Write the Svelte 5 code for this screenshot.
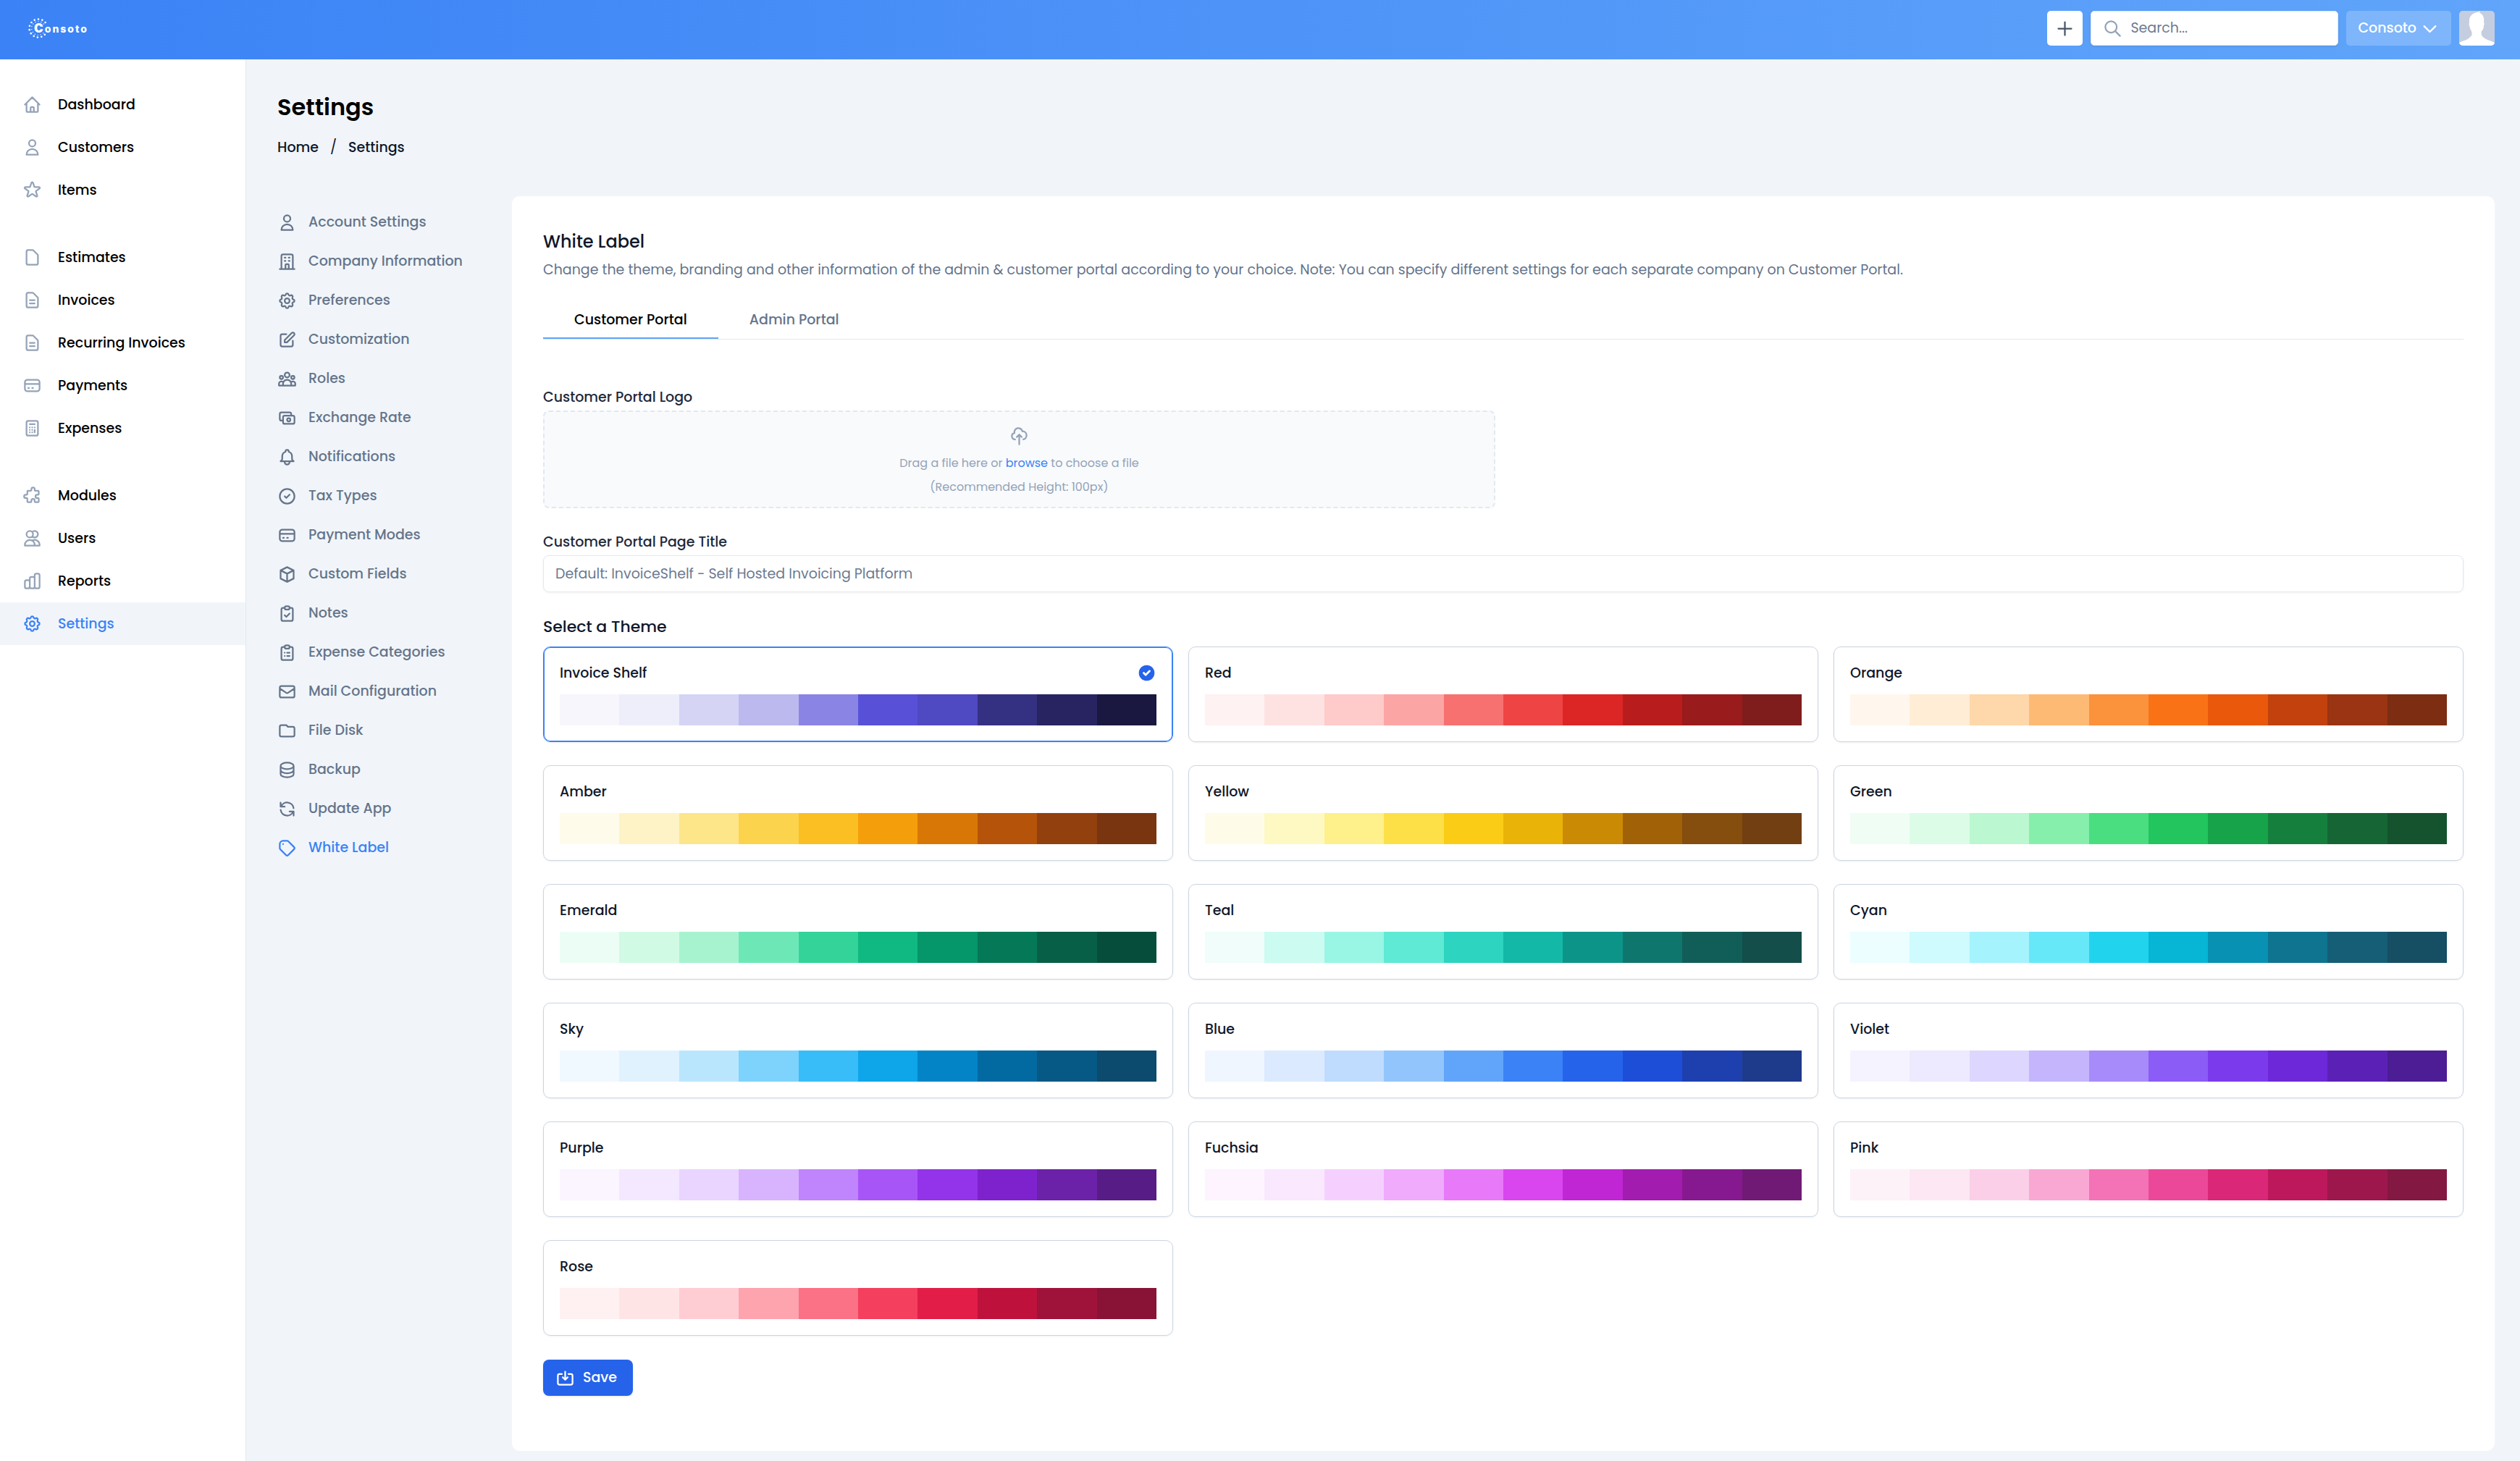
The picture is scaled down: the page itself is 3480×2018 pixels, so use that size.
<script>
  const icons = {
    home: 'M3 12l2-2m0 0l7-7 7 7M5 10v10a1 1 0 001 1h3m10-11l2 2m-2-2v10a1 1 0 01-1 1h-3m-6 0a1 1 0 001-1v-4a1 1 0 011-1h2a1 1 0 011 1v4a1 1 0 001 1m-6 0h6',
    user: 'M16 7a4 4 0 11-8 0 4 4 0 018 0zM12 14a7 7 0 00-7 7h14a7 7 0 00-7-7z',
    star: 'M11.049 2.927c.3-.921 1.603-.921 1.902 0l1.519 4.674a1 1 0 00.95.69h4.915c.969 0 1.371 1.24.588 1.81l-3.976 2.888a1 1 0 00-.363 1.118l1.518 4.674c.3.922-.755 1.688-1.538 1.118l-3.976-2.888a1 1 0 00-1.176 0l-3.976 2.888c-.783.57-1.838-.197-1.538-1.118l1.518-4.674a1 1 0 00-.363-1.118l-3.976-2.888c-.784-.57-.38-1.81.588-1.81h4.914a1 1 0 00.951-.69l1.519-4.674z',
    document: 'M7 21h10a2 2 0 002-2V9.414a1 1 0 00-.293-.707l-5.414-5.414A1 1 0 0012.586 3H7a2 2 0 00-2 2v14a2 2 0 002 2z',
    documentText: 'M9 12h6m-6 4h6m2 5H7a2 2 0 01-2-2V5a2 2 0 012-2h5.586a1 1 0 01.707.293l5.414 5.414a1 1 0 01.293.707V19a2 2 0 01-2 2z',
    card: 'M3 10h18M7 15h1m4 0h1m-7 4h12a3 3 0 003-3V8a3 3 0 00-3-3H6a3 3 0 00-3 3v8a3 3 0 003 3z',
    calculator: 'M9 7h6m0 10v-3m-3 3h.01M9 17h.01M9 14h.01M12 14h.01M15 11h.01M12 11h.01M9 11h.01M7 21h10a2 2 0 002-2V5a2 2 0 00-2-2H7a2 2 0 00-2 2v14a2 2 0 002 2z',
    puzzle: 'M11 4a2 2 0 114 0v1a1 1 0 001 1h3a1 1 0 011 1v3a1 1 0 01-1 1h-1a2 2 0 100 4h1a1 1 0 011 1v3a1 1 0 01-1 1h-3a1 1 0 01-1-1v-1a2 2 0 10-4 0v1a1 1 0 01-1 1H7a1 1 0 01-1-1v-3a1 1 0 00-1-1H4a2 2 0 110-4h1a1 1 0 001-1V7a1 1 0 011-1h3a1 1 0 001-1V4z',
    users: 'M12 4.354a4 4 0 110 5.292M15 21H3v-1a6 6 0 0112 0v1zm0 0h6v-1a6 6 0 00-9-5.197M13 7a4 4 0 11-8 0 4 4 0 018 0z',
    chart: 'M9 19v-6a2 2 0 00-2-2H5a2 2 0 00-2 2v6a2 2 0 002 2h2a2 2 0 002-2zm0 0V9a2 2 0 012-2h2a2 2 0 012 2v10m-6 0a2 2 0 002 2h2a2 2 0 002-2m0 0V5a2 2 0 012-2h2a2 2 0 012 2v14a2 2 0 01-2 2h-2a2 2 0 01-2-2z',
    cog: 'M10.325 4.317c.426-1.756 2.924-1.756 3.35 0a1.724 1.724 0 002.573 1.066c1.543-.94 3.31.826 2.37 2.37a1.724 1.724 0 001.065 2.572c1.756.426 1.756 2.924 0 3.35a1.724 1.724 0 00-1.066 2.573c.94 1.543-.826 3.31-2.37 2.37a1.724 1.724 0 00-2.572 1.065c-.426 1.756-2.924 1.756-3.35 0a1.724 1.724 0 00-2.573-1.066c-1.543.94-3.31-.826-2.37-2.37a1.724 1.724 0 00-1.065-2.572c-1.756-.426-1.756-2.924 0-3.35a1.724 1.724 0 001.066-2.573c-.94-1.543.826-3.31 2.37-2.37.996.608 2.296.07 2.572-1.065zM15 12a3 3 0 11-6 0 3 3 0 016 0z',
    office: 'M19 21V5a2 2 0 00-2-2H7a2 2 0 00-2 2v16m14 0h2m-2 0h-5m-9 0H3m2 0h5M9 7h1m-1 4h1m4-4h1m-1 4h1m-5 10v-5a1 1 0 011-1h2a1 1 0 011 1v5m-4 0h4',
    pencil: 'M11 5H6a2 2 0 00-2 2v11a2 2 0 002 2h11a2 2 0 002-2v-5m-1.414-9.414a2 2 0 112.828 2.828L11.828 15H9v-2.828l8.586-8.586z',
    group: 'M17 20h5v-2a3 3 0 00-5.356-1.857M17 20H7m10 0v-2c0-.656-.126-1.283-.356-1.857M7 20H2v-2a3 3 0 015.356-1.857M7 20v-2c0-.656.126-1.283.356-1.857m0 0a5.002 5.002 0 019.288 0M15 7a3 3 0 11-6 0 3 3 0 016 0zm6 3a2 2 0 11-4 0 2 2 0 014 0zM7 10a2 2 0 11-4 0 2 2 0 014 0z',
    cash: 'M17 9V7a2 2 0 00-2-2H5a2 2 0 00-2 2v6a2 2 0 002 2h2m2 4h10a2 2 0 002-2v-6a2 2 0 00-2-2H9a2 2 0 00-2 2v6a2 2 0 002 2zm7-5a2 2 0 11-4 0 2 2 0 014 0z',
    bell: 'M15 17h5l-1.405-1.405A2.032 2.032 0 0118 14.158V11a6.002 6.002 0 00-4-5.659V5a2 2 0 10-4 0v.341C7.67 6.165 6 8.388 6 11v3.159c0 .538-.214 1.055-.595 1.436L4 17h5m6 0v1a3 3 0 11-6 0v-1m6 0H9',
    checkCircle: 'M9 12l2 2 4-4m6 2a9 9 0 11-18 0 9 9 0 0118 0z',
    cube: 'M20 7l-8-4-8 4m16 0l-8 4m8-4v10l-8 4m0-10L4 7m8 4v10M4 7v10l8 4',
    clipboardCheck: 'M9 5H7a2 2 0 00-2 2v12a2 2 0 002 2h10a2 2 0 002-2V7a2 2 0 00-2-2h-2M9 5a2 2 0 002 2h2a2 2 0 002-2M9 5a2 2 0 012-2h2a2 2 0 012 2m-6 9l2 2 4-4',
    clipboardList: 'M9 5H7a2 2 0 00-2 2v12a2 2 0 002 2h10a2 2 0 002-2V7a2 2 0 00-2-2h-2M9 5a2 2 0 002 2h2a2 2 0 002-2M9 5a2 2 0 012-2h2a2 2 0 012 2m-3 7h3m-3 4h3m-6-4h.01M9 16h.01',
    mail: 'M3 8l7.89 5.26a2 2 0 002.22 0L21 8M5 19h14a2 2 0 002-2V7a2 2 0 00-2-2H5a2 2 0 00-2 2v10a2 2 0 002 2z',
    folder: 'M3 7v10a2 2 0 002 2h14a2 2 0 002-2V9a2 2 0 00-2-2h-6l-2-2H5a2 2 0 00-2 2z',
    database: 'M4 7v10c0 2.21 3.582 4 8 4s8-1.79 8-4V7M4 7c0 2.21 3.582 4 8 4s8-1.79 8-4M4 7c0-2.21 3.582-4 8-4s8 1.79 8 4m0 5c0 2.21-3.582 4-8 4s-8-1.79-8-4',
    refresh: 'M4 4v5h.582m15.356 2A8.001 8.001 0 004.582 9m0 0H9m11 11v-5h-.581m0 0a8.003 8.003 0 01-15.357-2m15.357 2H15',
    tag: 'M7 7h.01M7 3h5c.512 0 1.024.195 1.414.586l7 7a2 2 0 010 2.828l-7 7a2 2 0 01-2.828 0l-7-7A1.994 1.994 0 013 12V7a4 4 0 014-4z',
    search: 'M21 21l-6-6m2-5a7 7 0 11-14 0 7 7 0 0114 0z',
    plus: 'M12 4v16m8-8H4',
    chevron: 'M19 9l-7 7-7-7',
    cloud: 'M7 16a4 4 0 01-.88-7.903A5 5 0 1115.9 6L16 6a5 5 0 011 9.9M15 13l-3-3m0 0l-3 3m3-3v12',
    save: 'M8 7H5a2 2 0 00-2 2v9a2 2 0 002 2h14a2 2 0 002-2V9a2 2 0 00-2-2h-3m-1 4l-3 3m0 0l-3-3m3 3V4'
  };

  const mainNav = [
    [['Dashboard', 'home'], ['Customers', 'user'], ['Items', 'star']],
    [['Estimates', 'document'], ['Invoices', 'documentText'], ['Recurring Invoices', 'documentText'], ['Payments', 'card'], ['Expenses', 'calculator']],
    [['Modules', 'puzzle'], ['Users', 'users'], ['Reports', 'chart'], ['Settings', 'cog']]
  ];

  const settingsNav = [
    ['Account Settings', 'user'], ['Company Information', 'office'], ['Preferences', 'cog'],
    ['Customization', 'pencil'], ['Roles', 'group'], ['Exchange Rate', 'cash'],
    ['Notifications', 'bell'], ['Tax Types', 'checkCircle'], ['Payment Modes', 'card'],
    ['Custom Fields', 'cube'], ['Notes', 'clipboardCheck'], ['Expense Categories', 'clipboardList'],
    ['Mail Configuration', 'mail'], ['File Disk', 'folder'], ['Backup', 'database'],
    ['Update App', 'refresh'], ['White Label', 'tag']
  ];

  const themes = [
    ['Invoice Shelf', '#f7f6fd #eeeefb #d5d4f5 #bcb9ee #8a85e4 #5851d8 #4f49c2 #353182 #282461 #1a1841'],
    ['Red', '#fef2f2 #fee2e2 #fecaca #fca5a5 #f87171 #ef4444 #dc2626 #b91c1c #991b1b #7f1d1d'],
    ['Orange', '#fff7ed #ffedd5 #fed7aa #fdba74 #fb923c #f97316 #ea580c #c2410c #9a3412 #7c2d12'],
    ['Amber', '#fffbeb #fef3c7 #fde68a #fcd34d #fbbf24 #f59e0b #d97706 #b45309 #92400e #78350f'],
    ['Yellow', '#fefce8 #fef9c3 #fef08a #fde047 #facc15 #eab308 #ca8a04 #a16207 #854d0e #713f12'],
    ['Green', '#f0fdf4 #dcfce7 #bbf7d0 #86efac #4ade80 #22c55e #16a34a #15803d #166534 #14532d'],
    ['Emerald', '#ecfdf5 #d1fae5 #a7f3d0 #6ee7b7 #34d399 #10b981 #059669 #047857 #065f46 #064e3b'],
    ['Teal', '#f0fdfa #ccfbf1 #99f6e4 #5eead4 #2dd4bf #14b8a6 #0d9488 #0f766e #115e59 #134e4a'],
    ['Cyan', '#ecfeff #cffafe #a5f3fc #67e8f9 #22d3ee #06b6d4 #0891b2 #0e7490 #155e75 #164e63'],
    ['Sky', '#f0f9ff #e0f2fe #bae6fd #7dd3fc #38bdf8 #0ea5e9 #0284c7 #0369a1 #075985 #0c4a6e'],
    ['Blue', '#eff6ff #dbeafe #bfdbfe #93c5fd #60a5fa #3b82f6 #2563eb #1d4ed8 #1e40af #1e3a8a'],
    ['Violet', '#f5f3ff #ede9fe #ddd6fe #c4b5fd #a78bfa #8b5cf6 #7c3aed #6d28d9 #5b21b6 #4c1d95'],
    ['Purple', '#faf5ff #f3e8ff #e9d5ff #d8b4fe #c084fc #a855f7 #9333ea #7e22ce #6b21a8 #581c87'],
    ['Fuchsia', '#fdf4ff #fae8ff #f5d0fe #f0abfc #e879f9 #d946ef #c026d3 #a21caf #86198f #701a75'],
    ['Pink', '#fdf2f8 #fce7f3 #fbcfe8 #f9a8d4 #f472b6 #ec4899 #db2777 #be185d #9d174d #831843'],
    ['Rose', '#fff1f2 #ffe4e6 #fecdd3 #fda4af #fb7185 #f43f5e #e11d48 #be123c #9f1239 #881337']
  ].map(([name, shades]) => ({ name, shades: shades.split(' ') }));

  // Rays of the logo: two rings of dots, open on the side where the name runs on.
  const rays = Array.from({ length: 12 }, (_, i) => {
    const a = ((45 + i * 25) * Math.PI) / 180;
    return { x: Math.cos(a), y: Math.sin(a) };
  });

  let selected = $state('Invoice Shelf');
  let tab = $state('Customer Portal');
</script>

{#snippet icon(name)}
  <svg class="icon" viewBox="0 0 24 24" aria-hidden="true"><path d={icons[name]} /></svg>
{/snippet}

<header class="topbar">
  <a class="logo" href="#home" aria-label="Consoto">
    <svg class="rays" viewBox="0 0 28 28" aria-hidden="true">
      {#each rays as r}
        <circle cx={14 + r.x * 12.5} cy={14 + r.y * 12.5} r="1.3" />
        <circle cx={14 + r.x * 9.4} cy={14 + r.y * 9.4} r="0.7" />
      {/each}
    </svg>
    <span class="wordmark"><b>C</b>onsoto</span>
  </a>
  <div class="tools">
    <button class="add" aria-label="Create new">{@render icon('plus')}</button>
    <label class="search">
      {@render icon('search')}
      <input type="search" placeholder="Search..." aria-label="Search" />
    </label>
    <button class="company">Consoto {@render icon('chevron')}</button>
    <button class="avatar" aria-label="Account">
      <svg viewBox="0 0 49 48" aria-hidden="true">
        <rect width="49" height="48" fill="#c5cde0" />
        <path fill="#fff" d="M0 48v-4c5-3 13-4 15-8 3-1 3-5 2-8-2-2-2-5-3-8-1-1 0-3 0-4-1-8 4-13 11-14 1 0 3-2 4-1l-1 2c5 1 7 7 6 13 1 1 1 3 0 4 0 4-1 6-3 8-1 3 0 7 2 8 3 4 11 5 16 8v4z" />
      </svg>
    </button>
  </div>
</header>

<div class="shell">
  <nav class="sidebar" aria-label="Main">
    {#each mainNav as group}
      <ul>
        {#each group as [label, name]}
          <li><a href="#{name}" class:current={label === 'Settings'}>{@render icon(name)}{label}</a></li>
        {/each}
      </ul>
    {/each}
  </nav>

  <main>
    <h1>Settings</h1>
    <nav class="crumbs" aria-label="Breadcrumb">
      <a href="#home">Home</a><span>/</span><a href="#settings">Settings</a>
    </nav>

    <div class="columns">
      <nav class="settings-nav" aria-label="Settings">
        {#each settingsNav as [label, name]}
          <a href="#{name}" class:current={label === 'White Label'}>{@render icon(name)}{label}</a>
        {/each}
      </nav>

      <form class="panel">
        <h2>White Label</h2>
        <p class="intro">Change the theme, branding and other information of the admin &amp; customer portal according to your choice. Note: You can specify different settings for each separate company on Customer Portal.</p>

        <div class="tabs" role="tablist">
          {#each ['Customer Portal', 'Admin Portal'] as name}
            <button type="button" role="tab" aria-selected={tab === name} class:active={tab === name} onclick={() => (tab = name)}>{name}</button>
          {/each}
        </div>

        <label class="field-label first" for="logo-file">Customer Portal Logo</label>
        <label class="dropzone">
          <input id="logo-file" class="hidden" type="file" />
          {@render icon('cloud')}
          <span>Drag a file here or <em>browse</em> to choose a file</span>
          <span>(Recommended Height: 100px)</span>
        </label>

        <label class="field-label" for="page-title">Customer Portal Page Title</label>
        <input id="page-title" class="text" type="text" placeholder="Default: InvoiceShelf - Self Hosted Invoicing Platform" />

        <h3>Select a Theme</h3>
        <div class="themes">
          {#each themes as theme}
            <label class="theme" class:chosen={selected === theme.name}>
              <input class="hidden" type="radio" name="theme" value={theme.name} bind:group={selected} />
              <span class="theme-head">
                {theme.name}
                {#if selected === theme.name}
                  <svg class="check" viewBox="0 0 20 20" aria-hidden="true"><path fill-rule="evenodd" d="M10 18a8 8 0 100-16 8 8 0 000 16zm3.707-9.293a1 1 0 00-1.414-1.414L9 10.586 7.707 9.293a1 1 0 00-1.414 1.414l2 2a1 1 0 001.414 0l4-4z" /></svg>
                {/if}
              </span>
              <span class="swatches">
                {#each theme.shades as shade}<span style:background={shade}></span>{/each}
              </span>
            </label>
          {/each}
        </div>

        <button class="save" type="button">{@render icon('save')}Save</button>
      </form>
    </div>
  </main>
</div>

<style>
  :global(body) {
    background: #f1f5f9;
  }
  :global(#app) {
    min-height: 100vh;
    display: flex;
    flex-direction: column;
    font: 400 19px/28px Poppins, Inter, 'Open Sans', sans-serif;
    color: #0f172a;
  }
  :global(#app) :global(*) {
    box-sizing: border-box;
  }
  a {
    color: inherit;
    text-decoration: none;
  }
  button,
  input {
    font: inherit;
    color: inherit;
    border: 0;
    padding: 0;
    background: none;
  }
  button {
    cursor: pointer;
  }
  h1, h2, h3, p, ul {
    margin: 0;
    padding: 0;
    list-style: none;
  }
  input::placeholder {
    color: #6b7a90;
    opacity: 1;
  }
  .icon {
    width: 27px;
    height: 27px;
    flex: none;
    fill: none;
    stroke: currentColor;
    stroke-width: 2;
    stroke-linecap: round;
    stroke-linejoin: round;
  }
  .hidden {
    position: absolute;
    opacity: 0;
    width: 1px;
    height: 1px;
  }

  .topbar {
    height: 82px;
    padding: 0 35px 4px 39px;
    display: flex;
    align-items: center;
    justify-content: space-between;
    background: linear-gradient(to right, #3b82f6, #60a5fa);
    color: #fff;
  }
  .logo {
    display: flex;
    align-items: center;
  }
  .rays {
    width: 28px;
    height: 28px;
    margin-right: -20px;
    fill: #fff;
  }
  .wordmark {
    font: 800 14px/20px Inter, sans-serif;
    letter-spacing: 2px;
  }
  .wordmark b {
    font-size: 17px;
  }
  .tools {
    display: flex;
    gap: 11px;
    height: 48px;
  }
  .add {
    width: 49px;
    display: grid;
    place-items: center;
    border-radius: 5px;
    background: #fff;
    color: #475569;
  }
  .search {
    width: 342px;
    display: flex;
    align-items: center;
    gap: 11px;
    padding: 0 16px;
    border: 1px solid #e2e8f0;
    border-radius: 5px;
    background: #fff;
    color: #94a3b8;
    box-shadow: 0 1px 3px rgba(0, 0, 0, 0.1);
  }
  .search input {
    min-width: 0;
    flex: 1;
    outline: 0;
    color: #0f172a;
  }
  .company {
    display: flex;
    align-items: center;
    gap: 5px;
    padding: 0 16px;
    border-radius: 5px;
    background: rgba(255, 255, 255, 0.2);
    font-weight: 500;
  }
  .avatar {
    width: 49px;
    overflow: hidden;
    border-radius: 5px;
  }
  .avatar svg {
    display: block;
  }

  .shell {
    flex: 1;
    display: flex;
  }
  .sidebar {
    width: 340px;
    flex: none;
    display: flex;
    flex-direction: column;
    gap: 34px;
    padding-top: 33px;
    border-right: 1px solid #e2e8f0;
    background: #fff;
    color: #000;
    font-weight: 500;
  }
  .sidebar a {
    height: 59px;
    display: flex;
    align-items: center;
    gap: 22px;
    padding-left: 31px;
  }
  .sidebar .icon {
    color: #94a3b8;
  }
  .sidebar .current {
    background: #f1f5f9;
  }
  .current,
  .sidebar .current .icon {
    color: #3b82f6;
  }

  main {
    flex: 1;
    min-width: 0;
    display: flex;
    flex-direction: column;
    padding: 44px 35px 15px 43px;
  }
  h1 {
    font-size: 32px;
    line-height: 44px;
    font-weight: 600;
    color: #000;
  }
  .crumbs {
    display: flex;
    gap: 16px;
    margin-top: 20px;
    font-weight: 500;
  }
  .crumbs span {
    font-weight: 400;
  }
  .columns {
    display: flex;
    margin-top: 53px;
  }
  .settings-nav {
    width: 324px;
    flex: none;
    padding-top: 9px;
    color: #64748b;
    font-weight: 500;
  }
  .settings-nav a {
    height: 54px;
    display: flex;
    align-items: center;
    gap: 16px;
  }
  .settings-nav .current {
    color: #3b82f6;
  }

  .panel {
    flex: 1;
    min-width: 0;
    padding: 43px 43px 76px;
    border-radius: 11px;
    background: #fff;
  }
  h2 {
    font-size: 24px;
    line-height: 40px;
    font-weight: 500;
  }
  .intro {
    margin-top: 5px;
    color: #64748b;
  }
  .tabs {
    display: flex;
    margin-top: 29px;
    border-bottom: 1px solid #e2e8f0;
  }
  .tabs button {
    padding: 12px 43px 10px;
    border-bottom: 2px solid transparent;
    color: #64748b;
    font-weight: 500;
  }
  .tabs .active {
    border-color: #60a5fa;
    color: #000;
  }
  .field-label {
    display: block;
    margin: 33px 0 4px;
    color: #1e293b;
    font-weight: 500;
  }
  .field-label.first {
    margin-top: 66px;
  }
  .dropzone {
    position: relative;
    width: calc(50% - 11px);
    display: flex;
    flex-direction: column;
    align-items: center;
    gap: 9px;
    padding: 20px 0 15px;
    border: 2px dashed #e2e8f0;
    border-radius: 8px;
    background: #f8fafc;
    color: #94a3b8;
    font-size: 16px;
    line-height: 24px;
  }
  .dropzone .icon {
    margin-bottom: 3px;
  }
  .dropzone em {
    font-style: normal;
    color: #3b82f6;
  }
  .text {
    width: 100%;
    height: 51px;
    padding: 0 16px;
    border: 1px solid #e2e8f0;
    border-radius: 8px;
    box-shadow: 0 1px 3px rgba(0, 0, 0, 0.06);
  }
  h3 {
    margin-top: 32px;
    font-size: 22px;
    line-height: 32px;
    font-weight: 500;
  }
  .themes {
    display: grid;
    grid-template-columns: repeat(3, minmax(0, 1fr));
    gap: 32px 21px;
    margin-top: 11px;
  }
  .theme {
    position: relative;
    display: flex;
    flex-direction: column;
    gap: 16px;
    padding: 22px;
    border: 1px solid #cbd5e1;
    border-radius: 10px;
    box-shadow: 0 1px 3px rgba(0, 0, 0, 0.06);
    cursor: pointer;
  }
  .theme.chosen {
    border-color: #3b82f6;
    box-shadow: inset 0 0 0 1px #3b82f6, 0 1px 3px rgba(0, 0, 0, 0.06);
  }
  .theme-head {
    height: 27px;
    display: flex;
    align-items: center;
    justify-content: space-between;
    font-weight: 500;
  }
  .check {
    width: 27px;
    height: 27px;
    fill: #2563eb;
  }
  .swatches {
    display: flex;
    height: 43px;
  }
  .swatches span {
    flex: 1;
  }
  .save {
    height: 50px;
    display: flex;
    align-items: center;
    gap: 11px;
    margin-top: 33px;
    padding: 0 22px 0 17px;
    border-radius: 8px;
    background: #2563eb;
    color: #fff;
    font-weight: 500;
    box-shadow: 0 1px 3px rgba(0, 0, 0, 0.1);
  }
</style>
